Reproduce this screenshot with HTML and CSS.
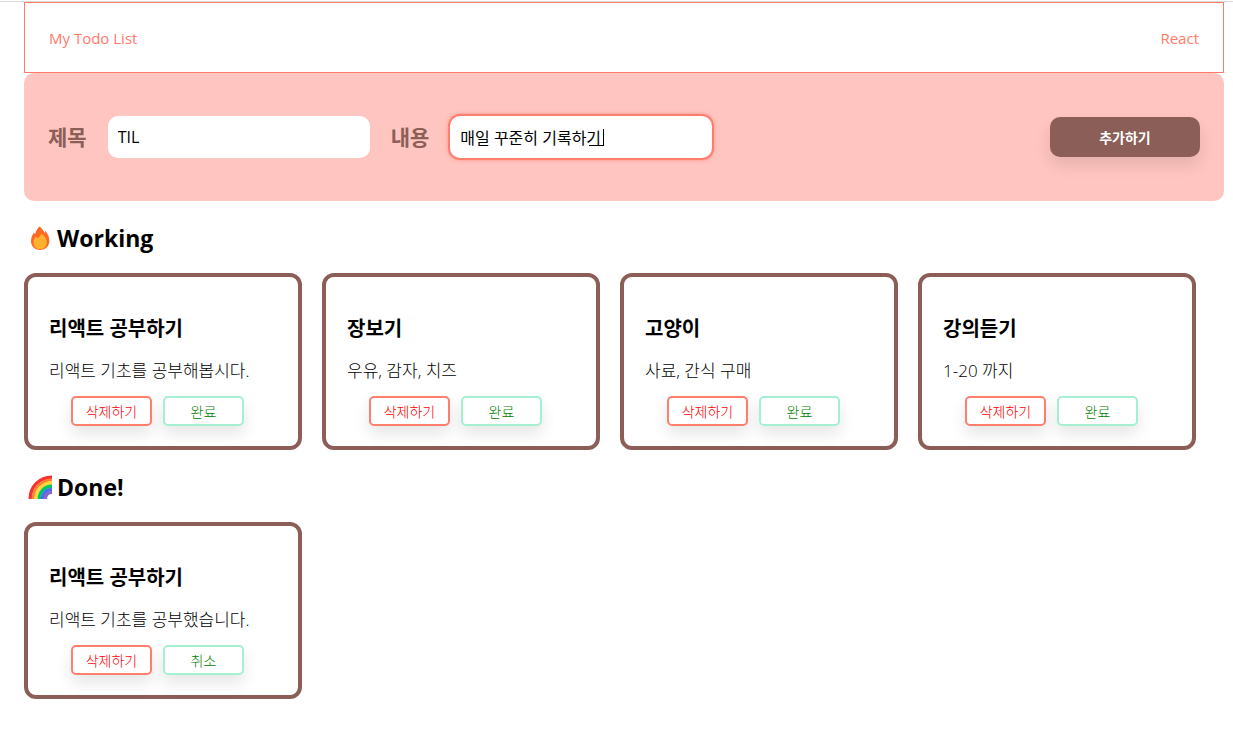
FILE: index.html
```
<!DOCTYPE html>
<html lang="ko">
<head>
    <meta charset="UTF-8">
    <meta name="viewport" content="width=device-width, initial-scale=1.0">
    <title>My Todo List</title>
    <link rel="stylesheet" href="styles.css">
</head>
<body>

<div class="layout">
    <header class="header">
        <div>My Todo List</div>
        <div>React</div>
    </header>

    <form class="add-form">
        <div class="input-group">
            <label class="form-label" for="title">제목</label>
            <input type="text" id="title" class="add-input" value="TIL">
            <label class="form-label" for="content">내용</label>
            <div class="typing">
                <input type="text" id="content" class="add-input active" value="매일 꾸준히 기록하기">
                <span class="composing"></span>
            </div>
        </div>
        <button type="button" class="add-button">추가하기</button>
    </form>

    <main>
        <h2 class="list-title">
            <svg class="emoji" viewBox="0 0 24 24" aria-hidden="true">
                <path fill="#ff6723" d="M11.500 .5c2.600 2 4.300 4.300 5 6.500.600-.500.800-1.200.800-2 2.700 2.800 4 6.200 4 10 0 5.200-3.800 9-9.200 9s-9.100-3.800-9.100-9c0-3.400 1.300-6 2.900-8.600.5 1 .8 1.300 1.300 1.600C7.700 5 9.500 2.500 11.500.5z"/>
                <path fill="#ffb02e" d="M13.200 7.500c3.500 2.400 5.600 5.400 5.600 8.800 0 4.200-2.700 7-6.700 7s-6.600-2.700-6.600-6.700c0-2.500 1-4.300 2.600-6 .400 1 .900 1.400 1.500 1.600 1.900-1 2.900-2.600 3.600-4.700z"/>
            </svg>
            Working
        </h2>
        <div class="list">
            <div class="card">
                <h3>리액트 공부하기</h3>
                <p>리액트 기초를 공부해봅시다.</p>
                <div class="buttons">
                    <button type="button" class="button delete">삭제하기</button>
                    <button type="button" class="button done">완료</button>
                </div>
            </div>
            <div class="card">
                <h3>장보기</h3>
                <p>우유, 감자, 치즈</p>
                <div class="buttons">
                    <button type="button" class="button delete">삭제하기</button>
                    <button type="button" class="button done">완료</button>
                </div>
            </div>
            <div class="card">
                <h3>고양이</h3>
                <p>사료, 간식 구매</p>
                <div class="buttons">
                    <button type="button" class="button delete">삭제하기</button>
                    <button type="button" class="button done">완료</button>
                </div>
            </div>
            <div class="card">
                <h3>강의듣기</h3>
                <p>1-20 까지</p>
                <div class="buttons">
                    <button type="button" class="button delete">삭제하기</button>
                    <button type="button" class="button done">완료</button>
                </div>
            </div>
        </div>

        <h2 class="list-title">
            <svg class="emoji" viewBox="0 0 24 24" aria-hidden="true">
                <g fill="none" stroke-width="3.400">
                    <path stroke="#f8312f" d="M2.200 24C2.200 11.500 11.500 2.200 24 2.200"/>
                    <path stroke="#ff822d" stroke-width="2.800" d="M5 24C5 13.500 13.500 5 24 5"/>
                    <path stroke="#fcd53f" d="M8 24C8 15 15 8 24 8"/>
                    <path stroke="#00c565" d="M11.300 24c0-7.300 5.400-12.700 12.700-12.700"/>
                    <path stroke="#4a6ff0" d="M14.400 24c0-5.500 4.100-9.600 9.600-9.600"/>
                    <path stroke="#8d65c5" d="M17.400 24c0-3.900 2.700-6.600 6.600-6.600"/>
                </g>
            </svg>
            Done!
        </h2>
        <div class="list">
            <div class="card">
                <h3>리액트 공부하기</h3>
                <p>리액트 기초를 공부했습니다.</p>
                <div class="buttons">
                    <button type="button" class="button delete">삭제하기</button>
                    <button type="button" class="button done">취소</button>
                </div>
            </div>
        </div>
    </main>
</div>

</body>
</html>
```
FILE: styles.css
```
* {
    box-sizing: border-box;
}
body {
    margin: 1px 0 0;
    border-top: 1px solid #dddddd;
    background-color: #ffffff;
    color: #000000;
    font-family: "Open Sans", "Noto Sans CJK KR", sans-serif;
    font-size: 16px;
    line-height: 24px;
}
button,
input {
    font-family: inherit;
}
.layout {
    min-width: 800px;
    padding: 0 9px 0 24px;
}
.header {
    display: flex;
    align-items: center;
    justify-content: space-between;
    height: 71px;
    padding: 0 24px;
    border: 1px solid #ff7a6b;
    color: #ff7a6b;
    font-size: 15px;
}
/* Form for a new todo */
.add-form {
    display: flex;
    align-items: center;
    justify-content: space-between;
    height: 128px;
    padding: 0 24px;
    border-radius: 10px;
    background-color: #ffc5c0;
}
.input-group {
    display: flex;
    align-items: center;
    gap: 21px;
}
.form-label {
    color: #8b5e57;
    font-size: 21px;
    font-weight: bold;
}
.add-input {
    display: block;
    width: 262px;
    height: 42px;
    padding: 0 10px;
    border: none;
    border-radius: 10px;
    background-color: #ffffff;
    font-size: 16px;
    outline: none;
}
.add-input.active {
    box-shadow: 0 0 0 2px #ff7f6f, 0 0 5px 1px #ff7f6f;
}
.typing {
    position: relative;
}
/* Underline and caret of the syllable being typed */
.composing {
    position: absolute;
    top: 13px;
    left: 139px;
    width: 15px;
    height: 17px;
    border-right: 1px solid #000000;
    border-bottom: 1px solid #000000;
}
.add-button {
    width: 150px;
    height: 40px;
    border: none;
    border-radius: 10px;
    background-color: #8b5e57;
    box-shadow: 0 8px 16px rgba(0, 0, 0, 0.1);
    color: #ffffff;
    font-size: 14px;
    font-weight: bold;
    cursor: pointer;
}
.list-title {
    display: flex;
    align-items: center;
    gap: 5px;
    margin: 20px 0 18px;
    padding-left: 4px;
    font-size: 23px;
    line-height: 34px;
}
.emoji {
    width: 24px;
    height: 24px;
}
.list {
    display: flex;
    flex-wrap: wrap;
    gap: 20px;
}
.card {
    width: 278px;
    padding: 38px 20px 20px 21px;
    border: 4px solid #8b5e57;
    border-radius: 12px;
}
.card h3 {
    margin: 0 0 16px;
    font-size: 20px;
    line-height: 28px;
}
.card p {
    margin: 0 0 13px;
    font-size: 17px;
    font-weight: 300;
}
.buttons {
    display: flex;
    gap: 11px;
    margin-left: 22px;
}
.button {
    width: 81px;
    height: 30px;
    padding: 0;
    border: 2px solid;
    border-radius: 5px;
    background-color: #ffffff;
    box-shadow: 0 8px 16px rgba(0, 0, 0, 0.1);
    font-size: 14px;
    font-weight: 300;
    cursor: pointer;
}
.button.delete {
    border-color: #ff7f6f;
    color: #ff0000;
}
.button.done {
    border-color: #a4f0d0;
    color: #008000;
}
```
